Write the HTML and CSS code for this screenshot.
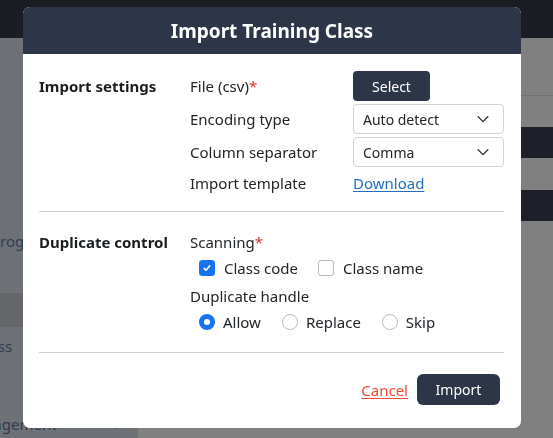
FILE: index.html
```html
<!DOCTYPE html>
<html>
<head>
<meta charset="utf-8">
<link rel="stylesheet" href="styles.css">
</head>
<body>
<div class="page">
  <div class="topbar"></div>
  <div class="below">
    <aside class="sidebar">
      <div class="side-item s1"><span class="cut c1">Program</span></div>
      <div class="side-item active"><span class="cut c0">s</span></div>
      <div class="side-item s2"><span class="cut c2">Class</span></div>
      <div class="side-item s3"><span class="cut c3">Management</span><span class="chev">&#8249;</span></div>
    </aside>
    <main class="main">
      <div class="main-head"></div>
      <div class="bar bar1"><span>Filter</span></div>
      <div class="bar bar2"><span>Start t</span></div>
    </main>
  </div>
</div>

<div class="modal">
  <div class="modal-head">Import Training Class</div>
  <div class="modal-body">
    <section class="section">
      <div class="sec-title">Import settings</div>
      <div class="settings">
        <div class="lbl">File (csv)<span class="req">*</span></div>
        <div class="ctl"><button class="btn-dark sel-btn">Select</button></div>
        <div class="lbl">Encoding type</div>
        <div class="ctl"><div class="select"><span>Auto detect</span><svg width="14" height="14" viewBox="0 0 16 16"><path d="M2.5 5.5 L8 11 L13.5 5.5" fill="none" stroke="#343a40" stroke-width="1.6" stroke-linecap="round" stroke-linejoin="round"/></svg></div></div>
        <div class="lbl">Column separator</div>
        <div class="ctl"><div class="select"><span>Comma</span><svg width="14" height="14" viewBox="0 0 16 16"><path d="M2.5 5.5 L8 11 L13.5 5.5" fill="none" stroke="#343a40" stroke-width="1.6" stroke-linecap="round" stroke-linejoin="round"/></svg></div></div>
        <div class="lbl">Import template</div>
        <div class="ctl"><a class="link" href="#">Download</a></div>
      </div>
    </section>
    <hr class="divider">
    <section class="section dup">
      <div class="sec-title">Duplicate control</div>
      <div class="dup-col">
        <div class="line">Scanning<span class="req">*</span></div>
        <div class="line opts gapb">
          <label class="opt"><span class="cb checked"><svg width="10" height="10" viewBox="0 0 16 16"><path d="M3.5 8.5 L6.5 11.5 L12.5 4.5" fill="none" stroke="#fff" stroke-width="2.6" stroke-linecap="round" stroke-linejoin="round"/></svg></span>Class code</label>
          <label class="opt"><span class="cb"></span>Class name</label>
        </div>
        <div class="line">Duplicate handle</div>
        <div class="line opts">
          <label class="opt r"><span class="rd checked"></span>Allow</label>
          <label class="opt r"><span class="rd"></span>Replace</label>
          <label class="opt r"><span class="rd"></span>Skip</label>
        </div>
      </div>
    </section>
    <hr class="divider d2">
    <div class="footer">
      <a class="cancel" href="#">Cancel</a>
      <button class="btn-dark imp-btn">Import</button>
    </div>
  </div>
</div>
</body>
</html>
```

FILE: styles.css
```css
* { box-sizing: border-box; }
html, body { margin: 0; padding: 0; }
body {
  width: 553px; height: 438px; overflow: hidden;
  font-family: "Noto Sans", "Open Sans", sans-serif;
  color: #212529;
  background: #808080;
}
.page { width: 553px; height: 438px; display: flex; flex-direction: column; }
.topbar { height: 38px; background: #1a1d24; flex: none; }
.below { flex: 1; display: flex; }
.sidebar { width: 138px; background: #6e7176; flex: none; padding-top: 188px; overflow: hidden; }
.side-item { height: 34px; display: flex; align-items: center; font-size: 15px; color: #2d3b55; white-space: nowrap; }
.side-item.s1 { height: 30px; margin-bottom: 37px; }
.side-item.active { background: #646669; color: #1b7f8a; }
.side-item.s2 { height: 38px; margin-bottom: 42px; }
.side-item.s3 { justify-content: space-between; padding-right: 20px; }
.cut { display: inline-block; }
.c1 { margin-left: -9px; }
.c0 { margin-left: -5px; font-size: 12px; }
.c2 { margin-left: -24px; }
.c3 { margin-left: -38px; }
.chev { font-size: 16px; color: #2d3b55; }
.main { flex: 1; display: flex; flex-direction: column; align-items: flex-end; }
.main-head { width: 100%; height: 58px; border-bottom: 1px solid #727272; }
.bar { background: #1d2029; color: #6d7077; font-weight: bold; font-size: 14px; height: 31px; display: flex; align-items: center; width: 140px; }
.bar1 { margin-top: 31px; padding-left: 60px; }
.bar2 { margin-top: 32px; padding-left: 44px; }

.modal {
  position: fixed; left: 23px; top: 7px; width: 498px; height: 421px;
  background: #fff; border-radius: 7px; overflow: hidden;
}
.modal-head {
  height: 47px; background: #2d3648; color: #fff;
  font-weight: bold; font-size: 19px;
  display: flex; align-items: center; justify-content: center;
}
.modal-body { padding: 17px 17px 0 16px; }
.section { display: flex; font-size: 15px; }
.sec-title { width: 151px; flex: none; font-weight: bold; line-height: 30px; color: #1b1e21; }
.settings { display: grid; grid-template-columns: 163px 151px; row-gap: 3px; grid-template-rows: 30px 30px 30px 26px; }
.lbl { display: flex; align-items: center; }
.ctl { display: flex; align-items: center; }
.req { color: #e03131; }
.btn-dark { background: #2d3648; color: #fff; border: none; font-family: inherit; }
.sel-btn { width: 77px; height: 30px; border-radius: 4px; font-size: 14px; }
.select {
  width: 151px; height: 30px; border: 1px solid #ced4da; border-radius: 4px;
  display: flex; align-items: center; justify-content: space-between;
  padding: 0 13px 0 9px; font-size: 14px; color: #212529;
}
.select svg { display: block; }
.link { color: #1f6fbf; text-decoration: underline; text-underline-offset: 2px; }
.divider { border: none; border-top: 1px solid #cfcfcf; margin: 15px 0 17px 0; }
.dup .sec-title { line-height: 26px; }
.line { height: 26px; display: flex; align-items: center; }
.line.opts { padding-left: 9px; }
.line.gapb { margin-bottom: 2px; }
.opt { display: flex; align-items: center; margin-right: 20px; }
.opt.r { margin-right: 21px; }
.cb {
  width: 16px; height: 16px; border: 1px solid #b8bcc0; border-radius: 3px;
  margin-right: 9px; display: flex; align-items: center; justify-content: center;
}
.cb.checked { background: #1673f0; border-color: #1673f0; }
.rd { width: 16px; height: 16px; border: 1px solid #b8bcc0; border-radius: 50%; margin-right: 8px; }
.rd.checked { border: 5px solid #1673f0; background: #fff; }
.d2 { margin: 17px 0 0 0; }
.footer { display: flex; justify-content: flex-end; align-items: center; padding: 21px 4px 23px 0; gap: 9px; }
.cancel { color: #f0492e; font-size: 15px; text-decoration: underline; text-underline-offset: 2px; }
.imp-btn { width: 83px; height: 31px; border-radius: 6px; font-size: 14px; }
```
